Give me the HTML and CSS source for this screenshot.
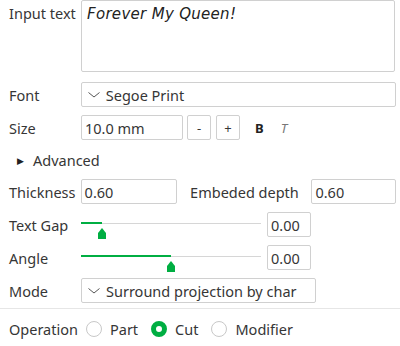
FILE: index.html
```html
<!DOCTYPE html>
<html lang="en">

<head>
  <meta charset="UTF-8">
  <title>emboss text</title>
  <link rel="stylesheet" href="styles.css">
</head>

<body>
  <div class="panel">

    <div class="row row-text">
      <label class="label">Input text</label>
      <div class="textbox">Forever My Queen!</div>
    </div>

    <div class="row">
      <label class="label">Font</label>
      <div class="select font-select">
        <svg class="chevron" width="12" height="6" viewBox="0 0 12 6"><polyline points="0.5,0.5 6,5 11.5,0.5" fill="none" stroke="#555" stroke-width="1"/></svg>
        <span>Segoe Print</span>
      </div>
    </div>

    <div class="row">
      <label class="label">Size</label>
      <div class="input size-input">10.0 mm</div>
      <div class="btn minus">-</div>
      <div class="btn plus">+</div>
      <span class="bold">B</span>
      <span class="italic">T</span>
    </div>

    <div class="row row-adv">
      <span class="arrow">&#9654;</span>
      <span>Advanced</span>
    </div>

    <div class="row">
      <label class="label">Thickness</label>
      <div class="input thick-input">0.60</div>
      <label class="label-2">Embeded depth</label>
      <div class="input depth-input">0.60</div>
    </div>

    <div class="row">
      <label class="label">Text Gap</label>
      <div class="slider">
        <div class="fill" style="width: 21px"></div>
        <svg class="thumb" style="left: 16px" width="10" height="11" viewBox="0 0 10 11"><polygon points="5,0 9,5 9,11 1,11 1,5" fill="#00ae42"/></svg>
      </div>
      <div class="input value">0.00</div>
    </div>

    <div class="row">
      <label class="label">Angle</label>
      <div class="slider">
        <div class="fill" style="width: 90px"></div>
        <svg class="thumb" style="left: 85px" width="10" height="11" viewBox="0 0 10 11"><polygon points="5,0 9,5 9,11 1,11 1,5" fill="#00ae42"/></svg>
      </div>
      <div class="input value">0.00</div>
    </div>

    <div class="row">
      <label class="label">Mode</label>
      <div class="select mode-select">
        <svg class="chevron" width="12" height="6" viewBox="0 0 12 6"><polyline points="0.5,0.5 6,5 11.5,0.5" fill="none" stroke="#555" stroke-width="1"/></svg>
        <span>Surround projection by char</span>
      </div>
    </div>

  </div>

  <div class="operation">
    <span class="op-label">Operation</span>
    <span class="radio"></span>
    <span class="radio-text">Part</span>
    <span class="radio checked"></span>
    <span class="radio-text">Cut</span>
    <span class="radio"></span>
    <span class="radio-text">Modifier</span>
  </div>

</body>

</html>
```

FILE: styles.css
```css
html,
body {
  height: 100%;
}

body {
  margin: 0;
  background: #FFF;
  color: #363636;
  font-family: "Noto Sans", sans-serif;
  font-size: 14.5px;
}

.panel {
  padding: 0 4px 0 9px;
  border-bottom: 1px solid #E6E6E6;
  height: 309px;
  box-sizing: border-box;
}

.row {
  display: flex;
  align-items: center;
  height: 25px;
  margin-top: 8px;
}

.row-text {
  align-items: flex-start;
  height: 74px;
  margin-top: 0;
}

.row-text .label {
  padding-top: 3px;
}

.label {
  width: 72px;
  line-height: 20px;
}

.textbox {
  width: 314px;
  height: 72px;
  border: 1px solid #D0D0D0;
  border-radius: 2px;
  padding: 4px 0 0 5px;
  box-sizing: border-box;
  font-family: "DejaVu Sans", sans-serif;
  font-style: italic;
  font-weight: 200;
  font-size: 15px;
  letter-spacing: 0.3px;
  color: #222;
}

.select,
.input,
.btn {
  height: 25px;
  border: 1px solid #D0D0D0;
  border-radius: 2px;
  box-sizing: border-box;
  display: flex;
  align-items: center;
}

.font-select {
  width: 316px;
}

.mode-select {
  width: 235px;
}

.chevron {
  margin: 1px 6px 0 6px;
}

.input {
  padding-left: 3px;
}

.size-input {
  width: 102px;
}

.btn {
  width: 24px;
  justify-content: center;
  font-size: 13px;
  margin-left: 4px;
}

.plus {
  margin-left: 5px;
}

.bold {
  font-weight: bold;
  font-size: 13px;
  margin-left: 15px;
  color: #222;
}

.italic {
  font-style: italic;
  font-size: 13px;
  margin-left: 17px;
  color: #777;
}

.row-adv {
  height: 22px;
  margin-top: 9px;
}

.arrow {
  font-size: 9px;
  margin-left: 8px;
  margin-right: 9px;
  color: #222;
}

.thick-input {
  width: 97px;
}

.label-2 {
  margin-left: 13px;
  width: 122px;
}

.depth-input {
  width: 85px;
}

.slider {
  width: 180px;
  height: 25px;
  position: relative;
}

.slider::before {
  content: "";
  position: absolute;
  left: 0;
  right: 0;
  top: 11px;
  height: 1px;
  background: #D6D6D6;
}

.fill {
  position: absolute;
  left: 0;
  top: 10px;
  height: 2px;
  background: #00AE42;
}

.thumb {
  position: absolute;
  top: 16px;
}

.value {
  width: 44px;
  margin-left: 6px;
}

.operation {
  display: flex;
  align-items: center;
  padding-left: 9px;
  height: 20px;
  margin-top: 10px;
}

.op-label {
  margin-right: 8px;
}

.radio {
  width: 16px;
  height: 16px;
  border: 1px solid #C8C8C8;
  border-radius: 50%;
  box-sizing: border-box;
}

.radio.checked {
  border: 5px solid #00AE42;
}

.radio-text {
  margin: 0 13px 0 8px;
}
```
